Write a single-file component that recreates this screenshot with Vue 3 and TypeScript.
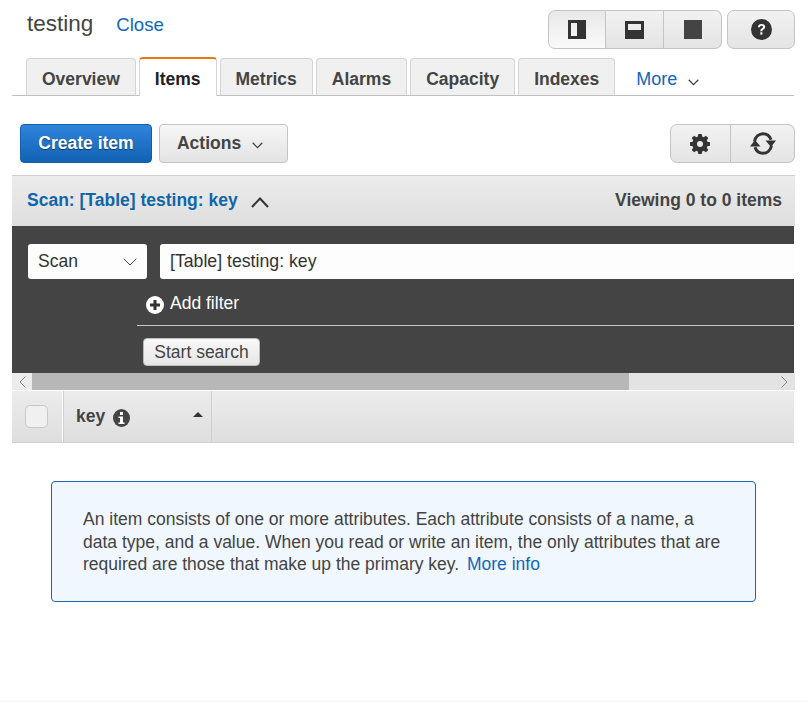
<template>
  <div class="page">
    <header class="top">
      <div class="title-wrap">
        <span class="title">testing</span>
        <a class="close">Close</a>
      </div>
      <div class="top-btns">
        <div class="btn-group">
          <button class="ibtn first active">
            <svg width="18" height="19" viewBox="0 0 18 19"><path fill="#333" fill-rule="evenodd" d="M0 0h18v19H0zM3 3v13h6V3z" /></svg>
          </button>
          <button class="ibtn">
            <svg width="19" height="18" viewBox="0 0 19 18"><path fill="#333" fill-rule="evenodd" d="M0 0h19v18H0zM3 3v6h13V3z" /></svg>
          </button>
          <button class="ibtn last">
            <svg width="18" height="19" viewBox="0 0 18 19"><rect width="18" height="19" fill="#444" /></svg>
          </button>
        </div>
        <button class="ibtn help">
          <svg width="21" height="21" viewBox="0 0 21 21">
            <circle cx="10.5" cy="10.5" r="10.5" fill="#333" />
            <path d="M7 8.2c0-2 1.500-3.200 3.600-3.200s3.500 1.100 3.500 2.900c0 2.400-2.800 2.300-2.800 4.300H9.300c0-2.900 2.700-2.900 2.700-4.200 0-.7-.6-1.200-1.400-1.200-.9 0-1.500.5-1.600 1.400z" fill="#fff" />
            <rect x="9.300" y="13.300" width="2.100" height="2.300" fill="#fff" />
          </svg>
        </button>
      </div>
    </header>

    <nav class="tabs">
      <a v-for="t in tabs" :key="t" class="tab" :class="{ active: t === 'Items' }">{{ t }}</a>
      <a class="more">More
        <svg class="chev" width="11" height="7" viewBox="0 0 11 7"><path d="M.7.8l4.800 4.800L10.300.8" fill="none" stroke="#444" stroke-width="1.300" /></svg>
      </a>
    </nav>

    <div class="toolbar">
      <div class="toolbar-left">
        <button class="create">Create item</button>
        <button class="actions">Actions
          <svg width="11" height="7" viewBox="0 0 11 7"><path d="M.7.8l4.800 4.800L10.300.8" fill="none" stroke="#444" stroke-width="1.300" /></svg>
        </button>
      </div>
      <div class="btn-group tool-group">
        <button class="ibtn first">
          <svg width="20" height="20" viewBox="0 0 20 20">
            <path fill="#333" fill-rule="evenodd" d="M8.300 0h3.400l.5 2.600 1.500.6 2.200-1.500 2.400 2.400-1.500 2.200.6 1.500 2.600.5v3.400l-2.600.5-.6 1.500 1.500 2.200-2.400 2.400-2.200-1.500-1.500.6-.5 2.600H8.300l-.5-2.600-1.500-.6-2.200 1.500-2.400-2.400 1.500-2.200-.6-1.500L0 11.700V8.300l2.600-.5.6-1.500-1.500-2.200 2.400-2.400 2.200 1.500 1.500-.6zM10 7a3 3 0 1 0 0 6 3 3 0 0 0 0-6z" />
          </svg>
        </button>
        <button class="ibtn last">
          <svg width="26" height="23" viewBox="0 0 26 23">
            <path d="M4.500 9.500C5.300 4.800 8.800 1.700 13 1.700c3.800 0 6.800 2.400 8 6" fill="none" stroke="#333" stroke-width="3" />
            <path d="M15.500 8.500L26 8.500 21 15z" fill="#333" />
            <path d="M21.500 13.500c-.8 4.700-4.300 7.800-8.500 7.800-3.800 0-6.800-2.400-8-6" fill="none" stroke="#333" stroke-width="3" />
            <path d="M0 14.500L10.500 14.500 5 8z" fill="#333" />
          </svg>
        </button>
      </div>
    </div>

    <section class="scan-head">
      <div class="scan-title">
        <a>Scan: [Table] testing: key</a>
        <svg width="18" height="11" viewBox="0 0 18 11"><path d="M1 10l8-8.500 8 8.500" fill="none" stroke="#333" stroke-width="2" /></svg>
      </div>
      <span class="viewing">Viewing 0 to 0 items</span>
    </section>

    <section class="scan-body">
      <div class="scan-row">
        <div class="select">Scan
          <svg width="14" height="8" viewBox="0 0 14 8"><path d="M.7.7L7 7l6.300-6.300" fill="none" stroke="#444" stroke-width="1" /></svg>
        </div>
        <div class="table-input">[Table] testing: key</div>
      </div>
      <div class="filter-row">
        <svg width="18" height="18" viewBox="0 0 18 18">
          <circle cx="9" cy="9" r="9" fill="#fff" />
          <path d="M9 4v10M4 9h10" stroke="#333" stroke-width="3" />
        </svg>
        <span>Add filter</span>
      </div>
      <div class="search-row">
        <button class="start">Start search</button>
      </div>
    </section>

    <div class="hscroll">
      <div class="arrow">
        <svg width="7" height="12" viewBox="0 0 7 12"><path d="M6.500.5L1 6l5.500 5.500" fill="none" stroke="#888" /></svg>
      </div>
      <div class="thumb"></div>
      <div class="arrow end">
        <svg width="7" height="12" viewBox="0 0 7 12"><path d="M.5.500L6 6l-5.500 5.500" fill="none" stroke="#888" /></svg>
      </div>
    </div>

    <div class="table-head">
      <div class="check-cell"><span class="check"></span></div>
      <div class="key-cell">
        <span class="key">key</span>
        <svg class="info" width="17" height="18" viewBox="0 0 17 18">
          <ellipse cx="8.500" cy="9" rx="8.500" ry="9" fill="#444" />
          <rect x="7" y="3" width="3" height="3" fill="#fff" />
          <path d="M5.500 7.500h4.500v6h1.500v1.500h-6v-1.500H7V9H5.500z" fill="#fff" />
        </svg>
        <svg class="sort" width="10" height="5" viewBox="0 0 10 5"><path d="M5 0l5 5H0z" fill="#333" /></svg>
      </div>
    </div>

    <div class="info-box">
      An item consists of one or more attributes. Each attribute consists of a name, a
      data type, and a value. When you read or write an item, the only attributes that are
      required are those that make up the primary key.
      <a>More info</a>
    </div>

    <div class="foot-line"></div>
  </div>
</template>

<script setup lang="ts">
const tabs: string[] = ['Overview', 'Items', 'Metrics', 'Alarms', 'Capacity', 'Indexes']
</script>

<style>
html,
body {
  margin: 0;
  background: #fff;
  overflow: hidden;
}
</style>

<style scoped>
.page {
  width: 807px;
  height: 702px;
  position: relative;
  overflow: hidden;
  font-family: "Liberation Sans", Arial, sans-serif;
  color: #444;
}

button {
  font-family: inherit;
  padding: 0;
  cursor: pointer;
}

.top {
  display: flex;
  justify-content: space-between;
  padding: 10px 12px 0 27px;
  height: 48px;
  box-sizing: border-box;
}

.title-wrap {
  display: flex;
  align-items: baseline;
  gap: 23px;
  height: 30px;
}

.title {
  font-size: 22.5px;
  line-height: 28px;
  color: #444;
}

.close {
  font-size: 18.6px;
  color: #1166bb;
}

.top-btns {
  display: flex;
  gap: 5px;
  height: 39px;
}

.btn-group {
  display: flex;
  height: 39px;
}

.ibtn {
  width: 58px;
  height: 39px;
  display: flex;
  align-items: center;
  justify-content: center;
  border: 1px solid #c4c4c4;
  border-left: 0;
  background: linear-gradient(#f2f2f2, #e4e4e4);
}

.ibtn.first {
  border-left: 1px solid #c4c4c4;
  border-radius: 7px 0 0 7px;
}

.ibtn.last {
  border-radius: 0 7px 7px 0;
}

.ibtn.active {
  background: linear-gradient(#e8e8e8, #fafafa);
}

.ibtn.help {
  width: 68px;
  border-left: 1px solid #c4c4c4;
  border-radius: 7px;
}

.tabs {
  display: flex;
  align-items: flex-end;
  gap: 3px;
  height: 48px;
  margin: 0 13px 0 12px;
  padding-left: 14px;
  border-bottom: 1px solid #c0c0c0;
  box-sizing: border-box;
}

.tab {
  height: 37px;
  padding: 0 15px;
  box-sizing: border-box;
  border: 1px solid #d4d4d4;
  border-bottom: 0;
  border-radius: 4px 4px 0 0;
  background: #f0f0f0;
  font-size: 17.5px;
  font-weight: 700;
  line-height: 40px;
  color: #444;
}

.tab.active {
  height: 39px;
  margin-bottom: -1px;
  background: #fff;
  border-top: 2px solid #e47911;
  color: #222;
  line-height: 41px;
}

.more {
  margin-left: 3px;
  padding-left: 15px;
  font-size: 18px;
  line-height: 32px;
  color: #1166bb;
  align-self: flex-end;
  height: 32px;
}

.chev {
  margin-left: 6px;
  vertical-align: -1px;
}

.toolbar {
  display: flex;
  justify-content: space-between;
  padding: 28px 12px 0 20px;
  height: 79px;
  box-sizing: border-box;
}

.toolbar-left {
  display: flex;
  gap: 7px;
}

.create {
  width: 132px;
  height: 39px;
  border: 1px solid #115fa8;
  border-radius: 4px;
  background: linear-gradient(#2f84dc, #1262b3);
  color: #fff;
  font-size: 17.5px;
  font-weight: 700;
  text-shadow: 0 1px 1px rgba(0, 0, 0, 0.5);
}

.actions {
  width: 129px;
  height: 39px;
  padding-right: 7px;
  border: 1px solid #c4c4c4;
  border-radius: 4px;
  background: linear-gradient(#f6f6f6, #e4e4e4);
  color: #444;
  font-size: 17.5px;
  font-weight: 700;
}

.actions svg {
  margin-left: 6px;
}

.tool-group .ibtn.first {
  width: 61px;
  padding-right: 2px;
}

.tool-group .ibtn.last {
  width: 64px;
}

.scan-head {
  display: flex;
  justify-content: space-between;
  align-items: center;
  height: 51px;
  margin-right: 12px;
  margin-left: 12px;
  padding: 0 13px 2px 15px;
  box-sizing: border-box;
  border-top: 1px solid #cfcfcf;
  background: linear-gradient(#ececec, #dedede);
}

.scan-title {
  display: flex;
  align-items: center;
  gap: 13px;
  font-size: 17.5px;
  font-weight: 700;
  color: #1166aa;
}

.scan-title svg {
  margin-top: 5px;
}

.viewing {
  font-size: 17.5px;
  font-weight: 700;
  color: #444;
}

.scan-body {
  height: 147px;
  margin: 0 13px 0 12px;
  background: #444;
  box-sizing: border-box;
  padding-top: 18px;
}

.scan-row {
  display: flex;
  gap: 13px;
  padding-left: 16px;
}

.select {
  width: 119px;
  height: 35px;
  background: #fdfdfd;
  border-radius: 3px;
  display: flex;
  align-items: center;
  justify-content: space-between;
  padding: 0 10px 0 10px;
  box-sizing: border-box;
  font-size: 17.5px;
  color: #333;
}

.table-input {
  flex: 1;
  height: 35px;
  background: #fdfdfd;
  border-radius: 3px 0 0 3px;
  padding-left: 10px;
  font-size: 17.7px;
  line-height: 35px;
  color: #333;
}

.filter-row {
  display: flex;
  align-items: center;
  gap: 6px;
  height: 46px;
  margin-left: 125px;
  padding-left: 9px;
  border-bottom: 1px solid #c8c8c8;
  color: #fff;
  font-size: 17.5px;
}

.filter-row span {
  margin-top: 2px;
}

.filter-row svg {
  margin-top: 6px;
}

.search-row {
  padding: 12px 0 0 131px;
}

.start {
  width: 117px;
  height: 28px;
  border: 1px solid #bbb;
  border-radius: 4px;
  background: linear-gradient(#f8f8f8, #e6e6e6);
  color: #444;
  font-size: 17.5px;
}

.hscroll {
  display: flex;
  align-items: stretch;
  height: 17px;
  margin: 0 12px;
  background: #e3e3e3;
}

.arrow {
  width: 20px;
  display: flex;
  align-items: center;
  justify-content: center;
  background: #ececec;
}

.arrow.end {
  margin-left: auto;
  background: transparent;
  width: 21px;
}

.thumb {
  width: 597px;
  background: #b7b7b7;
}

.table-head {
  display: flex;
  height: 52px;
  margin: 1px 13px 0 12px;
  box-sizing: border-box;
  border-bottom: 1px solid #cfcfcf;
  background: linear-gradient(#ececec, #dedede);
}

.check-cell {
  width: 51px;
  display: flex;
  align-items: center;
  justify-content: center;
  padding-right: 2px;
  box-sizing: border-box;
  border-right: 1px solid #fff;
}

.check {
  width: 23px;
  height: 23px;
  box-sizing: border-box;
  border: 1px solid #c8c8c8;
  border-radius: 5px;
  background: #f0f0f0;
}

.key-cell {
  position: relative;
  width: 149px;
  box-sizing: border-box;
  padding-left: 12px;
  display: flex;
  align-items: center;
  gap: 8px;
  border-left: 1px solid #cfcfcf;
  border-right: 1px solid #cfcfcf;
}

.key {
  font-size: 17.5px;
  font-weight: 700;
  margin-top: -1px;
  color: #444;
}

.info {
  margin-top: 2px;
}

.sort {
  position: absolute;
  right: 8px;
  top: 21px;
}

.info-box {
  margin: 38px 51px 0;
  width: 705px;
  height: 121px;
  box-sizing: border-box;
  border: 1px solid #1d66ae;
  border-radius: 4px;
  background: #f0f7fe;
  padding: 26px 30px 0 31px;
  font-size: 17.5px;
  line-height: 22.5px;
  color: #444;
}

.info-box a {
  color: #1166bb;
  margin-left: 3px;
}

.foot-line {
  position: absolute;
  left: 0;
  right: 0;
  bottom: 0;
  height: 1px;
  background: #f2f2f2;
}
</style>
